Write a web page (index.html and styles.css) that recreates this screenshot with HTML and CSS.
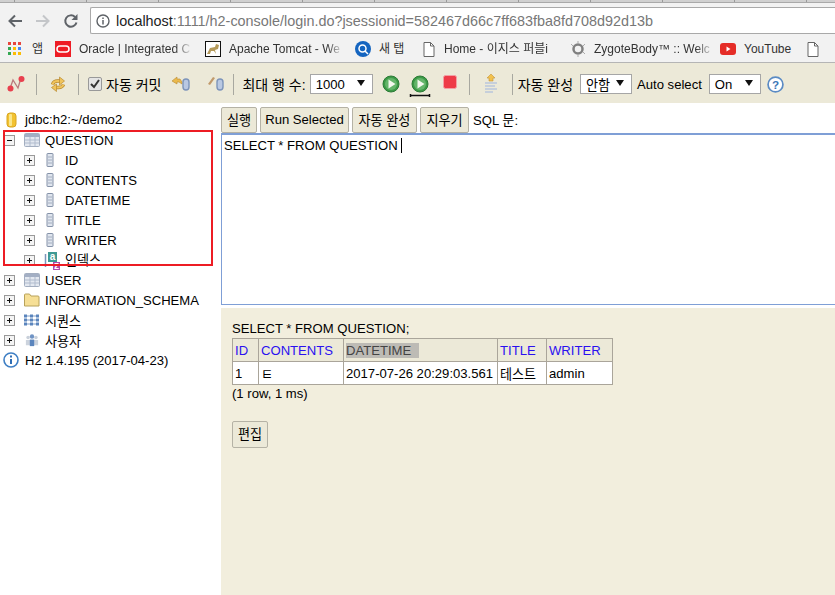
FILE: index.html
```html
<!DOCTYPE html>
<html lang="en">
<head>
  <meta charset="UTF-8" />
  <title>H2 Console</title>
  <link rel="stylesheet" href="styles.css">
</head>
<body>
  <svg class="defs" width="0" height="0">
    <symbol id="plus" viewBox="0 0 11 11"><rect x=".5" y=".5" width="10" height="10" fill="#f4f4f4" stroke="#999"/><path d="M3 5.500h5M5.500 3v5" stroke="#111"/></symbol>
    <symbol id="minus" viewBox="0 0 11 11"><rect x=".5" y=".5" width="10" height="10" fill="#f4f4f4" stroke="#999"/><path d="M3 5.500h5" stroke="#111"/></symbol>
    <symbol id="table" viewBox="0 0 16 14"><rect x=".5" y=".5" width="15" height="13" rx="1" fill="#e3e8f0" stroke="#a3aec0"/><path d="M1 1h14v3H1z" fill="#a3afc4"/><path d="M1 7h14M1 10h14M6 4v9M11 4v9" stroke="#b0bbcd"/></symbol>
    <symbol id="column" viewBox="0 0 8 14"><rect x="1" y=".5" width="6" height="13" rx=".5" fill="#dfe5ee" stroke="#8592a8"/><path d="M2 4h4M2 7h4M2 10h4" stroke="#a3aec0"/></symbol>
    <symbol id="play" viewBox="0 0 18 18"><circle cx="9" cy="9" r="8" fill="#3c9a46" stroke="#2b7a36"/><circle cx="9" cy="9" r="6" fill="#64b56a"/><path d="M6.500 4.500l7 4.500-7 4.500z" fill="#f4f8ee"/></symbol>
  </svg>

  <div class="tab-strip"></div>
  <div class="nav-bar">
    <svg class="nav-icon" viewBox="0 0 16 16"><path d="M15 8H3M8 2.500L2.500 8 8 13.500" fill="none" stroke="#5f6368" stroke-width="2"/></svg>
    <svg class="nav-icon" viewBox="0 0 16 16"><path d="M1 8h12M8 2.500L13.500 8 8 13.500" fill="none" stroke="#c4c6c9" stroke-width="2"/></svg>
    <svg class="nav-icon" viewBox="0 0 16 16"><path d="M13.500 9.500A5.700 5.700 0 1 1 12 4" fill="none" stroke="#5f6368" stroke-width="2"/><path d="M14.500 1v6h-6z" fill="#5f6368"/></svg>
    <div class="address">
      <svg class="info" viewBox="0 0 14 14"><circle cx="7" cy="7" r="6" fill="none" stroke="#5f6368" stroke-width="1.400"/><path d="M7 6v4.400M7 3.500v1.500" stroke="#5f6368" stroke-width="1.500"/></svg>
      <span class="host">localhost</span><span class="url">:1111/h2-console/login.do?jsessionid=582467d66c7ff683fba8fd708d92d13b</span>
    </div>
  </div>
  <div class="bookmarks">
    <span class="mark mark-apps">
      <svg width="14" height="14" viewBox="0 0 14 14"><path d="M0 0h3v3H0z" fill="#e8453c"/><path d="M5 0h3v3H5z" fill="#e8453c"/><path d="M10 0h3v3h-3z" fill="#e8453c"/><path d="M0 5h3v3H0z" fill="#34a853"/><path d="M5 5h3v3H5z" fill="#fbbc05"/><path d="M10 5h3v3h-3z" fill="#4285f4"/><path d="M0 10h3v3H0z" fill="#34a853"/><path d="M5 10h3v3H5z" fill="#fbbc05"/><path d="M10 10h3v3h-3z" fill="#fbbc05"/></svg>
      <span class="mark-text">앱</span>
    </span>
    <span class="mark mark-oracle">
      <svg width="16" height="16" viewBox="0 0 16 16"><rect width="16" height="16" fill="#ee1c25"/><rect x="2" y="5" width="12" height="6" rx="3" fill="none" stroke="#fff" stroke-width="1.500"/></svg>
      <span class="mark-text fade">Oracle | Integrated C</span>
    </span>
    <span class="mark mark-tomcat">
      <svg width="16" height="16" viewBox="0 0 16 16"><rect x=".5" y=".5" width="15" height="15" fill="#fff" stroke="#111"/><path d="M2 13l3-6 5-1 1-3 3 1-1 4-3 1 1 4-2-3-3 0-1 3z" fill="#b59a5a"/></svg>
      <span class="mark-text fade">Apache Tomcat - We</span>
    </span>
    <span class="mark mark-search">
      <svg width="16" height="16" viewBox="0 0 16 16"><circle cx="8" cy="8" r="8" fill="#1565c0"/><circle cx="7.500" cy="7.500" r="3.500" fill="none" stroke="#fff" stroke-width="1.500"/><path d="M10 10l3 3" stroke="#fff" stroke-width="1.500"/></svg>
      <span class="mark-text">새 탭</span>
    </span>
    <span class="mark mark-home">
      <svg width="12" height="15" viewBox="0 0 12 15"><path d="M1 .5h6.500l3.500 3.500v10.500H1z" fill="#fff" stroke="#666"/><path d="M7.500.5V4H11" fill="none" stroke="#666"/></svg>
      <span class="mark-text fade">Home - 이지스 퍼블i</span>
    </span>
    <span class="mark mark-zygote">
      <svg width="16" height="16" viewBox="0 0 16 16"><circle cx="8" cy="8" r="4.500" fill="none" stroke="#808080" stroke-width="2.500"/><path d="M8 0v3M8 13v3M1 3l2 2M13 11l2 2M15 3l-2 2" stroke="#aaa"/></svg>
      <span class="mark-text fade">ZygoteBody™ :: Welc</span>
    </span>
    <span class="mark mark-youtube">
      <svg width="16" height="12" viewBox="0 0 16 12"><rect width="16" height="12" rx="3" fill="#e52d27"/><path d="M6.500 3.500l4 2.500-4 2.500z" fill="#fff"/></svg>
      <span class="mark-text">YouTube</span>
    </span>
    <span class="mark mark-last">
      <svg width="12" height="15" viewBox="0 0 12 15"><path d="M1 .5h6.500l3.500 3.500v10.500H1z" fill="#fff" stroke="#666"/><path d="M7.500.5V4H11" fill="none" stroke="#666"/></svg>
    </span>
  </div>

  <div class="toolbar">
    <svg class="tool tool-conn" viewBox="0 0 18 16"><path d="M3 12.500L6 4l5 8 3-10" fill="none" stroke="#b9787c" stroke-width="1.300"/><circle cx="3.500" cy="12.500" r="3" fill="#e8404e"/><circle cx="14.500" cy="3" r="3" fill="#e8404e"/></svg>
    <span class="sep sep-a"></span>
    <svg class="tool tool-refresh" viewBox="0 0 16 16"><path d="M2.500 8.500Q3.500 5 7.500 5H10" fill="none" stroke="#b98a30" stroke-width="3.400"/><path d="M2.500 8.500Q3.500 5 7.500 5H10" fill="none" stroke="#f0c45c" stroke-width="2"/><path d="M9.500 1l5 4-5 4z" fill="#f0c45c" stroke="#b98a30" stroke-width=".7"/><path d="M13.500 8.500Q12.500 11.500 8.500 11.500H6" fill="none" stroke="#b98a30" stroke-width="3.400"/><path d="M13.500 8.500Q12.500 11.500 8.500 11.500H6" fill="none" stroke="#f0c45c" stroke-width="2"/><path d="M6.500 8l-5 3.500 5 4z" fill="#f0c45c" stroke="#b98a30" stroke-width=".7"/></svg>
    <span class="sep sep-b"></span>
    <span class="check"><svg width="10" height="10" viewBox="0 0 10 10"><path d="M1 5l3 3 5-7" fill="none" stroke="#333" stroke-width="2"/></svg></span>
    <span class="tool-label label-commit">자동 커밋</span>
    <svg class="tool tool-rollback" viewBox="0 0 20 16"><path d="M1 5l5-4v2h3l2 3v2l-3-2H6v2z" fill="#eab94d" stroke="#b98a30" stroke-width=".6"/><rect x="12" y="3" width="6" height="11" rx="3" fill="#b9c8e2" stroke="#7d94ba" stroke-width="1.400"/></svg>
    <svg class="tool tool-commit" viewBox="0 0 20 16"><path d="M2 8l5-7 2 1-5 7z" fill="#c19a6b"/><rect x="11" y="3" width="6" height="11" rx="3" fill="#b9c8e2" stroke="#7d94ba" stroke-width="1.400"/></svg>
    <span class="sep sep-c"></span>
    <span class="tool-label label-rows">최대 행 수:</span>
    <span class="select select-rows">1000<i></i></span>
    <svg class="tool tool-run"><use href="#play"/></svg>
    <svg class="tool tool-run-sel" viewBox="0 0 22 22"><use href="#play" width="18" height="18" x="2" y="0"/><path d="M1 20.500h20M1.500 19v3M20.500 19v3" stroke="#111" stroke-width="1.500"/></svg>
    <svg class="tool tool-stop" viewBox="0 0 14 14"><rect x=".5" y=".5" width="13" height="13" rx="2" fill="#ee3b48" stroke="#f3a0a6"/></svg>
    <span class="sep sep-d"></span>
    <svg class="tool tool-history" viewBox="0 0 16 20"><path d="M8 0l4 4h-2v3H6V4H4z" fill="#f2c14e" stroke="#c4963a" stroke-width=".6"/><path d="M2 9h12M2 12h10M2 15h12M2 18h8" stroke="#b9c6dc" stroke-width="1.400"/></svg>
    <span class="sep sep-e"></span>
    <span class="tool-label label-auto">자동 완성</span>
    <span class="select select-auto">안함<i></i></span>
    <span class="tool-label label-select">Auto select</span>
    <span class="select select-on">On<i></i></span>
    <svg class="tool tool-help" viewBox="0 0 16 16"><circle cx="8" cy="8" r="7" fill="#fff" stroke="#5b8bc4" stroke-width="1.600"/><text x="8" y="12" text-anchor="middle" class="help-mark">?</text></svg>
  </div>

  <div class="console">
    <div class="tree">
      <div class="tree-row row-root">
        <svg width="11" height="16" viewBox="0 0 11 16"><rect x="1" y="1" width="9" height="14" rx="3" fill="#f2c230" stroke="#d8a520"/><rect x="3" y="2" width="3" height="12" rx="1" fill="#fae68a"/></svg>
        <span>jdbc:h2:~/demo2</span>
      </div>
      <div class="tree-row"><svg class="expander"><use href="#minus"/></svg><svg class="icon-table"><use href="#table"/></svg><span>QUESTION</span></div>
      <div class="tree-row child"><svg class="expander"><use href="#plus"/></svg><svg class="icon-column"><use href="#column"/></svg><span>ID</span></div>
      <div class="tree-row child"><svg class="expander"><use href="#plus"/></svg><svg class="icon-column"><use href="#column"/></svg><span>CONTENTS</span></div>
      <div class="tree-row child"><svg class="expander"><use href="#plus"/></svg><svg class="icon-column"><use href="#column"/></svg><span>DATETIME</span></div>
      <div class="tree-row child"><svg class="expander"><use href="#plus"/></svg><svg class="icon-column"><use href="#column"/></svg><span>TITLE</span></div>
      <div class="tree-row child"><svg class="expander"><use href="#plus"/></svg><svg class="icon-column"><use href="#column"/></svg><span>WRITER</span></div>
      <div class="tree-row child row-index"><svg class="expander"><use href="#plus"/></svg>
        <svg class="icon-index" viewBox="0 0 16 18"><path d="M1.500 2v13" stroke="#7d94ba" stroke-width="1.500"/><rect x="4" y="0" width="9" height="10" fill="#3f9a94"/><text x="8.500" y="8" text-anchor="middle" class="index-mark">a</text><rect x="9" y="10" width="7" height="8" fill="#b04aa8"/><text x="12.500" y="16.500" text-anchor="middle" class="index-mark">z</text></svg>
        <span>인덱스</span></div>
      <div class="tree-row"><svg class="expander"><use href="#plus"/></svg><svg class="icon-table"><use href="#table"/></svg><span>USER</span></div>
      <div class="tree-row"><svg class="expander"><use href="#plus"/></svg>
        <svg class="icon-table" viewBox="0 0 16 14"><path d="M.5 3V2q0-1 1-1h4l1.500 2h7q1 0 1 1v9H.5z" fill="#f6df96" stroke="#b8a25a"/></svg>
        <span>INFORMATION_SCHEMA</span></div>
      <div class="tree-row"><svg class="expander"><use href="#plus"/></svg>
        <svg class="icon-table" viewBox="0 0 16 14"><path d="M1 3h14M1 7h14M1 11h14" stroke="#7d9cc6"/><g fill="#5b85bd"><rect y="1.500" width="3" height="3"/><rect x="6" y="1.500" width="3" height="3"/><rect x="12" y="1.500" width="3" height="3"/><rect y="5.500" width="3" height="3"/><rect x="6" y="5.500" width="3" height="3"/><rect x="12" y="5.500" width="3" height="3"/><rect y="9.500" width="3" height="3"/><rect x="6" y="9.500" width="3" height="3"/><rect x="12" y="9.500" width="3" height="3"/></g></svg>
        <span>시퀀스</span></div>
      <div class="tree-row"><svg class="expander"><use href="#plus"/></svg>
        <svg class="icon-table" viewBox="0 0 16 16"><circle cx="3.500" cy="5" r="2" fill="#c9d0da"/><circle cx="12.500" cy="5" r="2" fill="#c9d0da"/><path d="M1 14V8h5v6zM10 14V8h5v6z" fill="#ccd3dd"/><circle cx="8" cy="4" r="2.500" fill="#6f93c4"/><path d="M5.500 15V7.500h5V15z" fill="#5b85bd"/></svg>
        <span>사용자</span></div>
      <div class="tree-row row-version">
        <svg width="16" height="16" viewBox="0 0 16 16"><circle cx="8" cy="8" r="7" fill="#fff" stroke="#3f7fc4" stroke-width="1.600"/><path d="M8 7v5M8 3.500v2" stroke="#2e6db4" stroke-width="2"/></svg>
        <span>H2 1.4.195 (2017-04-23)</span></div>
      <div class="highlight"></div>
    </div>

    <div class="main">
      <div class="query-bar">
        <button class="btn btn-run">실행</button>
        <button class="btn btn-selected">Run Selected</button>
        <button class="btn btn-complete">자동 완성</button>
        <button class="btn btn-clear">지우기</button>
        <span class="sql-label">SQL 문:</span>
      </div>
      <div class="editor">SELECT * FROM QUESTION <span class="caret"></span></div>
      <div class="results">
        <div class="result-sql">SELECT * FROM QUESTION;</div>
        <table class="result-table">
          <tr>
            <th class="col-id">ID</th>
            <th class="col-contents">CONTENTS</th>
            <th class="col-datetime"><span class="selected">DATETIME&nbsp;&nbsp;</span></th>
            <th class="col-title">TITLE</th>
            <th class="col-writer">WRITER</th>
          </tr>
          <tr>
            <td>1</td>
            <td>ㅌ</td>
            <td>2017-07-26 20:29:03.561</td>
            <td>테스트</td>
            <td>admin</td>
          </tr>
        </table>
        <div class="result-count">(1 row, 1 ms)</div>
        <button class="btn btn-edit">편집</button>
      </div>
    </div>
  </div>
</body>
</html>
```

FILE: styles.css
```css
html, body {
  margin: 0;
  height: 595px;
  overflow: hidden;
}

body {
  font-family: "Liberation Sans", Arial, "Noto Sans CJK KR", sans-serif;
  font-size: 13.1px;
  color: #000;
  background-color: #fff;
}

.defs {
  display: block;
  height: 0;
}

/* browser chrome */
.tab-strip {
  height: 2px;
  background: repeating-linear-gradient(90deg, #d0d0d0 0 14px, #999 14px 15px, #d0d0d0 15px 72px);
  border-bottom: 1px solid #a9a9a9;
}

.nav-bar {
  height: 33px;
  box-sizing: border-box;
  padding: 2px 0 0 7px;
  display: flex;
  align-items: center;
  background-color: #f2f2f2;
}

.nav-icon {
  width: 16px;
  height: 16px;
  margin-right: 12px;
  flex: none;
}

.address {
  flex: 1;
  height: 27px;
  box-sizing: border-box;
  margin-left: -1px;
  display: flex;
  align-items: center;
  background-color: #fff;
  border: 1px solid #a9a9a9;
  border-right: none;
  border-radius: 2px 0 0 2px;
  font-size: 14.4px;
  white-space: nowrap;
  overflow: hidden;
}

.info {
  width: 14px;
  height: 14px;
  margin: 0 6px 0 5px;
  flex: none;
}

.host {
  color: #222;
}

.url {
  color: #777;
}

.bookmarks {
  height: 26px;
  display: flex;
  align-items: center;
  background-color: #f2f2f2;
  border-bottom: 1px solid #b5b5b5;
  font-size: 12px;
  color: #333;
  white-space: nowrap;
  overflow: hidden;
}

.mark {
  display: flex;
  align-items: center;
  flex: none;
}

.mark svg {
  flex: none;
}

.mark-text {
  margin-left: 8px;
  display: block;
  line-height: 14px;
}

.fade {
  -webkit-mask-image: linear-gradient(to right, #000 85%, transparent);
  mask-image: linear-gradient(to right, #000 85%, transparent);
}

.mark-apps { width: 47px; margin-left: 8px; }
.mark-apps .mark-text { margin-left: 10px; }
.mark-oracle { width: 150px; }
.mark-oracle .mark-text { width: 113px; }
.mark-tomcat { width: 150px; }
.mark-tomcat .mark-text { width: 115px; }
.mark-search { width: 68px; }
.mark-home { width: 147px; }
.mark-home .mark-text { width: 120px; margin-left: 9px; }
.mark-zygote { width: 150px; }
.mark-zygote .mark-text { width: 120px; }
.mark-youtube { width: 87px; }

/* h2 toolbar */
.toolbar {
  height: 40px;
  box-sizing: border-box;
  padding-top: 2px;
  display: flex;
  align-items: center;
  background-color: #ece9d8;
  font-size: 14px;
  white-space: nowrap;
}

.tool {
  flex: none;
  width: 16px;
  height: 16px;
}

.sep {
  flex: none;
  width: 1px;
  height: 21px;
  background-color: #a8a8a0;
}

.tool-conn { width: 18px; margin-left: 7px; }
.sep-a { margin-left: 11px; }
.tool-refresh { margin-left: 13px; }
.sep-b { margin-left: 12px; }

.check {
  flex: none;
  width: 10px;
  height: 10px;
  padding: 1px;
  margin-left: 9px;
  display: flex;
  background-color: #e4e4e4;
  border: 1px solid #999;
  border-radius: 2px;
}

.label-commit { margin-left: 4px; }
.tool-rollback { width: 20px; margin-left: 10px; }
.tool-commit { width: 20px; margin-left: 15px; }
.sep-c { margin-left: 7px; }
.label-rows { margin-left: 8px; }

.select {
  flex: none;
  height: 20px;
  display: flex;
  align-items: center;
  box-sizing: border-box;
  padding-left: 5px;
  background-color: #fff;
  border: 1px solid #a6a6a6;
  position: relative;
  font-size: 13.1px;
}

.select i {
  position: absolute;
  right: 7px;
  top: 5px;
  border-left: 4px solid transparent;
  border-right: 4px solid transparent;
  border-top: 6px solid #111;
}

.select-rows { width: 63px; margin-left: 4px; }
.tool-run { width: 18px; height: 18px; margin-left: 9px; }
.tool-run-sel { width: 22px; height: 22px; margin-left: 9px; margin-top: 3px; }
.tool-stop { width: 14px; height: 14px; margin-left: 12px; margin-top: -4px; }
.sep-d { margin-left: 12px; }
.tool-history { height: 20px; margin-left: 13px; }
.sep-e { margin-left: 13px; }
.label-auto { margin-left: 5px; }
.select-auto { width: 52px; margin-left: 7px; }
.label-select { margin-left: 5px; font-size: 13.1px; }
.select-on { width: 52px; margin-left: 7px; }
.tool-help { width: 17px; height: 17px; margin-left: 6px; }

.help-mark {
  font-family: "Liberation Sans", Arial, sans-serif;
  font-size: 11px;
  font-weight: bold;
  fill: #3c78b8;
}

.index-mark {
  font-family: "Liberation Sans", Arial, sans-serif;
  font-size: 10px;
  font-weight: bold;
  fill: #fff;
}

/* main area */
.console {
  display: flex;
  height: 492px;
}

.tree {
  flex: none;
  width: 221px;
  padding-top: 6px;
  box-sizing: border-box;
  position: relative;
}

.tree-row {
  height: 20px;
  display: flex;
  align-items: center;
  padding-left: 4px;
  white-space: nowrap;
}

.tree-row.child {
  padding-left: 24px;
}

.tree-row.row-root {
  height: 21px;
}

.expander {
  flex: none;
  width: 11px;
  height: 11px;
}

.icon-table {
  flex: none;
  width: 16px;
  height: 14px;
  margin: 0 5px 0 9px;
}

.icon-column {
  flex: none;
  width: 8px;
  height: 14px;
  margin: 0 11px 0 11px;
}

.icon-index {
  flex: none;
  width: 16px;
  height: 18px;
  margin: 2px 5px 0 9px;
}

.row-root svg {
  margin: 0 8px 0 2px;
}

.row-index span {
  margin-top: -2px;
}

.row-version svg {
  margin: 0 6px 0 -1px;
  flex: none;
}

.highlight {
  position: absolute;
  left: 3px;
  top: 27px;
  width: 206px;
  height: 132px;
  border: 2px solid #ed1c24;
  pointer-events: none;
}

.main {
  flex: 1;
  min-width: 0;
  display: flex;
  flex-direction: column;
}

.query-bar {
  height: 30px;
  display: flex;
  align-items: flex-end;
  gap: 3px;
}

.btn {
  height: 26px;
  padding: 0 0 2px;
  font-family: inherit;
  font-size: 13.1px;
  color: #000;
  background-color: #ece9d8;
  border: 1px solid #b5b2a5;
  border-radius: 2px;
}

.btn-run { width: 36px; }
.btn-selected { width: 89px; }
.btn-complete { width: 65px; }
.btn-clear { width: 49px; }

.sql-label {
  align-self: center;
  margin: 2px 0 0 1px;
}

.editor {
  height: 172px;
  box-sizing: border-box;
  padding: 3px 2px;
  border: 1px solid #7f9fd6;
  border-top-width: 2px;
  border-right: none;
  white-space: nowrap;
  line-height: 16px;
}

.caret {
  display: inline-block;
  width: 1px;
  height: 15px;
  background-color: #000;
  vertical-align: -3px;
}

.results {
  flex: 1;
  margin-top: 3px;
  background-color: #f2eedd;
  padding: 13px 11px;
}

.result-sql {
  height: 16px;
  line-height: 16px;
}

.result-table {
  table-layout: fixed;
  width: 380px;
  border-collapse: collapse;
  margin-top: 1px;
}

.result-table th,
.result-table td {
  box-sizing: border-box;
  height: 23px;
  padding: 0 2px;
  border: 1px solid #aaa59a;
  font-weight: normal;
  text-align: left;
  white-space: nowrap;
  overflow: hidden;
}

.result-table th {
  background-color: #ece9d8;
  color: #2a10f0;
}

.result-table td {
  background-color: #fff;
}

.result-table th.col-datetime {
  color: #444;
}

.col-id { width: 26px; }
.col-contents { width: 85px; }
.col-datetime { width: 154px; }
.col-title { width: 49px; }
.col-writer { width: 66px; }

.selected {
  background-color: #bdbbb5;
}

.result-count {
  margin-top: 1px;
  height: 16px;
  line-height: 16px;
}

.btn-edit {
  display: block;
  width: 36px;
  margin-top: 19px;
  height: 27px;
}
```
